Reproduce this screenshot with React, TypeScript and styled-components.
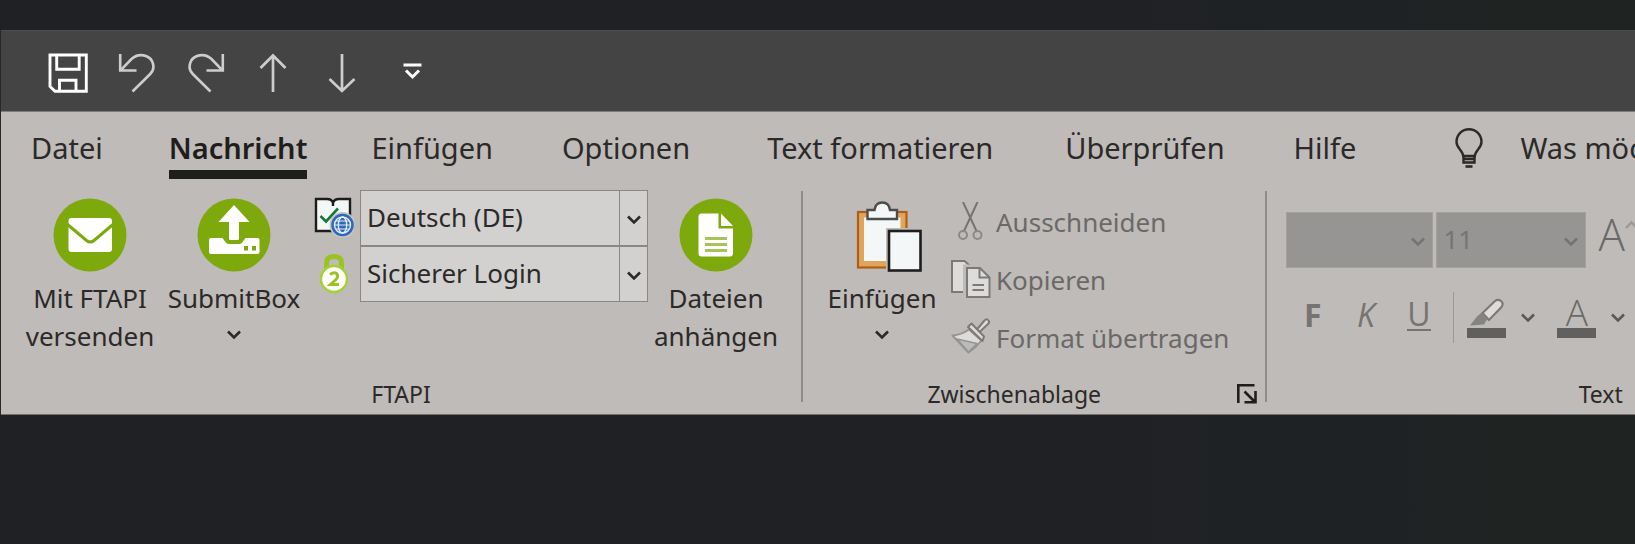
import React from 'react';
import styled, { createGlobalStyle, css } from 'styled-components';

const GlobalStyle = createGlobalStyle`
  *, *::before, *::after { box-sizing: border-box; }
  body {
    margin: 0;
    min-height: 100vh;
    overflow-x: hidden;
    font-family: "Noto Sans", "Open Sans", sans-serif;
    color: #2b2a29;
    background: linear-gradient(to right, #202125 0%, #202125 70%, #1e2224 78%, #1e2224 86%, #1f2322 92%);
  }
  button, select { font: inherit; color: inherit; }
`;

const Window = styled.div`
  margin-top: 30px;
  border-left: 1px solid #26282a;
  overflow: hidden;
`;

const QuickBar = styled.header`
  display: flex;
  align-items: center;
  gap: 29px;
  height: 81px;
  padding: 4px 47px 0;
  background: #444444;
  border-top: 1px solid #4c4c4c;
`;

const PlainButton = styled.button`
  display: flex;
  flex: none;
  align-items: center;
  margin: 0;
  padding: 0;
  border: 0;
  background: none;
  white-space: nowrap;
`;

const QuickButton = styled(PlainButton)<{ $dim?: boolean }>`
  justify-content: center;
  width: 40px;
  height: 40px;
  color: ${(p) => (p.$dim ? '#cfcdcb' : '#ffffff')};
`;

const Ribbon = styled.main`
  background: #bfbbb8;
  border-top: 1px solid #7f7d7b;
  border-bottom: 1px solid #73716f;
  padding-bottom: 4px;
`;

const TabBar = styled.nav`
  display: flex;
  align-items: flex-start;
  height: 78px;
  padding: 16px 0 0 30px;
  font-size: 29px;
  line-height: 40px;
`;

const Tab = styled(PlainButton)<{ $active?: boolean; $gap: number }>`
  margin-right: ${(p) => p.$gap}px;
  padding-bottom: 2px;
  border-bottom: 9px solid ${(p) => (p.$active ? '#1e1e1c' : 'transparent')};
  ${(p) => p.$active && css`font-weight: 600; color: #1e1e1c;`}
`;

const TellMe = styled(PlainButton)`
  align-items: flex-start;
  gap: 37px;
`;

const Groups = styled.div`
  display: flex;
`;

const Group = styled.section<{ $grow?: boolean }>`
  display: flex;
  flex-direction: column;
  flex: ${(p) => (p.$grow ? '1 0 auto' : 'none')};
`;

const GroupBody = styled.div<{ $left: number; $right: number; $gap?: number }>`
  display: flex;
  align-items: flex-start;
  gap: ${(p) => p.$gap ?? 0}px;
  height: 188px;
  padding: 0 ${(p) => p.$right}px 0 ${(p) => p.$left}px;
`;

const Caption = styled.footer<{ $end?: boolean }>`
  display: flex;
  align-items: center;
  gap: 12px;
  height: 32px;
  padding-right: ${(p) => (p.$end ? 16 : 0)}px;
  font-size: 23px;
  line-height: 32px;
  text-align: ${(p) => (p.$end ? 'right' : 'center')};
`;

const CaptionText = styled.span`
  flex: 1;
`;

const Launcher = styled(PlainButton)`
  margin-right: 8px;
`;

const Separator = styled.div`
  flex: none;
  width: 2px;
  margin: 1px 0 8px;
  background: #8e8b89;
`;

const ShortSeparator = styled.div`
  flex: none;
  width: 1px;
  height: 51px;
  margin: 0 13px 0 8px;
  background: #9b9996;
`;

const LargeButton = styled(PlainButton)<{ $width: number }>`
  flex-direction: column;
  width: ${(p) => p.$width}px;
  padding-top: 8px;
  font-size: 26px;
  line-height: 38px;
  text-align: center;

  svg:first-child { margin-bottom: 7px; }
  svg + span + svg { margin-top: 13px; }
`;

const Fields = styled.div`
  margin: 0 5px 0 2px;
`;

const FieldRow = styled.label`
  display: flex;
  align-items: center;
  gap: 6px;
  font-size: 26px;

  > svg { flex: none; }
`;

const SelectFrame = styled.span<{ $width: number; $disabled?: boolean }>`
  position: relative;
  display: block;
  width: ${(p) => p.$width}px;
  height: 56px;
  border: 1px solid ${(p) => (p.$disabled ? '#a3a19e' : '#8a8885')};
  background: ${(p) => (p.$disabled ? '#969593' : '#d2d1cf')};
  color: ${(p) => (p.$disabled ? '#757471' : '#2b2a29')};
  font-size: 26px;
`;

const Select = styled.select`
  display: block;
  width: 100%;
  height: 100%;
  padding: 0 32px 3px 6px;
  border: 0;
  border-radius: 0;
  appearance: none;
  background: none;
  opacity: 1;
`;

const SelectArrow = styled.span<{ $disabled?: boolean }>`
  position: absolute;
  top: 0;
  right: 0;
  display: flex;
  align-items: center;
  justify-content: center;
  width: 28px;
  height: 100%;
  padding-top: 4px;
  border-left: ${(p) => (p.$disabled ? 0 : 1)}px solid #8a8885;
  pointer-events: none;
`;

const Commands = styled.div`
  padding-top: 3px;
`;

const SmallButton = styled(PlainButton)`
  gap: 5px;
  height: 58px;
  font-size: 26px;
  color: #6b6967;
`;

const FontPanel = styled.div`
  padding-top: 22px;
  color: #6a6967;
`;

const FontRow = styled.div<{ $top?: number }>`
  display: flex;
  align-items: center;
  margin-top: ${(p) => p.$top ?? 0}px;

  > ${SelectFrame} { margin-right: 3px; }
`;

const GrowButton = styled(PlainButton)`
  align-self: flex-start;
  align-items: flex-start;
  margin-left: 9px;
  font-size: 44px;
  line-height: 44px;
  font-family: "Open Sans", "Noto Sans", sans-serif;
  font-weight: 300;

  svg { margin-top: 8px; }
`;

const LetterButton = styled(PlainButton)<{ $look: 'bold' | 'italic' | 'underline' }>`
  justify-content: center;
  width: 53px;
  height: 51px;
  padding-bottom: 6px;
  font-size: 32px;
  font-weight: ${(p) => (p.$look === 'bold' ? 700 : 400)};
  font-style: ${(p) => (p.$look === 'italic' ? 'italic' : 'normal')};
  font-family: "Open Sans", "Noto Sans", sans-serif;
  color: #757472;

  span {
    line-height: 30px;
    border-bottom: ${(p) => (p.$look === 'underline' ? 2 : 0)}px solid;
  }
`;

const ColorButton = styled(PlainButton)`
  gap: 15px;

  & + & { margin-left: 22px; }
`;

const ColorSwatch = styled.span`
  display: flex;
  justify-content: center;
  width: 39px;
  height: 40px;
  border-bottom: 10px solid #61605e;
  font-size: 37px;
  line-height: 28px;
  font-family: "Open Sans", "Noto Sans", sans-serif;
  font-weight: 300;
`;

const Chevron = ({ color = '#2b2a29' }: { color?: string }) => (
  <svg width="14" height="10" viewBox="0 0 14 10" fill="none" stroke={color} strokeWidth="2.6" aria-hidden>
    <path d="M1 1.5 7 7.5 13 1.5" />
  </svg>
);

const SaveIcon = () => (
  <svg width="40" height="40" viewBox="0 0 40 40" fill="none" stroke="currentColor" strokeWidth="2.9">
    <path d="M2 2H38.300V38.300H7L2 33.500zM8.700 2v14.300h22.500V2M11.500 38V27.200h16.500V38" />
  </svg>
);

const UndoIcon = ({ flip }: { flip?: boolean }) => (
  <svg width="40" height="40" viewBox="0 0 40 40" fill="none" stroke="currentColor" strokeWidth="2.6">
    <g transform={flip ? 'translate(40 0) scale(-1 1)' : undefined}>
      <path d="M3.200 1V17.500H19.500M3.600 17.300 14.500 6C22-1 32.500 2.500 35.200 8.500c2.500 5.500 1 9.500-2 12.500L15.500 38.500" />
    </g>
  </svg>
);

const ArrowIcon = ({ down }: { down?: boolean }) => (
  <svg width="40" height="40" viewBox="0 0 40 40" fill="none" stroke="currentColor" strokeWidth="2.7">
    <path d={down ? 'M18 1V38M5.500 26 18 38 30.500 26' : 'M18 39V2M5.500 15 18 2.500 30.500 15'} />
  </svg>
);

const CustomizeIcon = () => (
  <svg width="40" height="40" viewBox="0 0 40 40" fill="none" stroke="currentColor" strokeWidth="3">
    <path d="M10.500 12H28.500M13 17.500 19.500 24 26 17.500" />
  </svg>
);

const BulbIcon = () => (
  <svg width="28" height="46" viewBox="0 0 28 46" fill="none" stroke="#2b2a29" strokeWidth="2.4" aria-hidden>
    <path d="M8.500 29.500C8.500 22 1.500 21 1.500 13.700A12.500 12.500 0 0 1 26.500 13.700C26.500 21 19.500 22 19.500 29.500" />
    <path d="M8.500 28V34.500H19.500V28zM8.500 31H19.500" />
    <path d="M10.500 38.500H17.500" strokeWidth="2.600" />
  </svg>
);

const MailIcon = () => (
  <svg width="74" height="74" viewBox="0 0 74 74" aria-hidden>
    <circle cx="37" cy="37" r="36.500" fill="#7da90d" />
    <rect x="15.500" y="20" width="43.500" height="34" rx="3" fill="#fff" />
    <path d="M14 26 33.500 42.500Q37.300 45.500 41 42.500L60.500 26" fill="none" stroke="#7da90d" strokeWidth="3" />
  </svg>
);

const UploadIcon = () => (
  <svg width="74" height="74" viewBox="0 0 74 74" aria-hidden>
    <circle cx="37" cy="37" r="36.500" fill="#7da90d" />
    <path fill="#fff" d="M37 7 52.500 24H42V40.500Q42 42 40.500 42H33.500Q32 42 32 40.500V24H21.500z" />
    <path fill="#fff" d="M14 40Q12 40 12 42V54Q12 56 14 56H60.500Q62.500 56 62.500 54V42Q62.500 40 60.500 40H48.500L46 43.500Q44.500 46 42 46H32Q29.500 46 28 43.500L25.500 40z" />
    <path fill="#7da90d" d="M47 48h4v4.500h-4zM55 48h4v4.500h-4z" />
  </svg>
);

const DocIcon = () => (
  <svg width="74" height="74" viewBox="0 0 74 74" aria-hidden>
    <circle cx="37" cy="37" r="36.500" fill="#7da90d" />
    <path fill="#fff" d="M23 15.500H39.500V30.500H54V55.500Q54 58.500 51 58.500H22.500Q19.500 58.500 19.500 55.500V18.500Q19.500 15.500 23 15.500z" />
    <path fill="#fff" d="M42 15.500 54 28H42z" />
    <path stroke="#a6c556" strokeWidth="2.800" d="M26 40.500H48M26 46.500H48M26 52.500H48" />
  </svg>
);

const LanguageIcon = () => (
  <svg width="40" height="42" viewBox="0 0 40 42" fill="none" aria-hidden>
    <path d="M2 2H13Q17.500 2 19 5.500Q20.500 2 25 2H36V34H2z" fill="#f3f7f6" stroke="#1c1c1c" strokeWidth="2.400" />
    <path d="M19 3V9" stroke="#1c1c1c" strokeWidth="2.400" />
    <path d="M6.500 19 12 24.500 24 11.500" stroke="#187a3a" strokeWidth="2.600" />
    <circle cx="28.500" cy="28" r="13" fill="#c6c4c2" />
    <circle cx="28.500" cy="28" r="11.200" fill="#2c68bd" />
    <g stroke="#e6eefa" strokeWidth="1.400">
      <ellipse cx="28.500" cy="28" rx="4.200" ry="8" />
      <circle cx="28.500" cy="28" r="8" />
      <path d="M20.500 28H36.500M22 24H35M22 32H35" strokeWidth="1.200" />
    </g>
  </svg>
);

const LockIcon = () => (
  <svg width="40" height="40" viewBox="0 0 40 40" fill="none" aria-hidden>
    <path d="M12.500 15V9Q12.500 2.500 20 2.500T27.500 9V15" stroke="#98c322" strokeWidth="5" />
    <circle cx="20" cy="25" r="13" fill="#fff" stroke="#a5d02f" strokeWidth="2.400" />
    <path d="M16 20.500Q20 17.500 22.600 19.500Q25 22.500 21.500 26L16.500 30.500H25" stroke="#98c322" strokeWidth="3" />
  </svg>
);

const PasteIcon = () => (
  <svg width="84" height="74" viewBox="-16 0 84 74" fill="none" aria-hidden>
    <rect x="2" y="14" width="48.500" height="55.500" fill="#e0a55c" stroke="#b35c14" strokeWidth="2.200" />
    <rect x="8" y="19.500" width="36.500" height="43.500" fill="#f3f7f7" />
    <path d="M11.500 21V12H18.500Q19.500 4.500 26.300 4.500T34 12H41V21z" fill="#f3f7f7" stroke="#4d4d4d" strokeWidth="2.400" />
    <rect x="30" y="30" width="37" height="44" fill="#bfbbb8" />
    <rect x="33" y="33" width="31.500" height="39.500" fill="#f3f7f7" stroke="#1e1e1e" strokeWidth="2.600" />
  </svg>
);

const CutIcon = () => (
  <svg width="42" height="40" viewBox="0 0 42 40" fill="none" stroke="#8b8987" strokeWidth="2" aria-hidden>
    <path d="M14 0 27.500 29M28.500 0 15 29" stroke="#767472" />
    <circle cx="14" cy="33" r="4" />
    <circle cx="28.500" cy="33" r="4" />
  </svg>
);

const CopyIcon = () => (
  <svg width="42" height="40" viewBox="0 0 42 40" stroke="#7c7a78" strokeWidth="2" fill="#dddcda" aria-hidden>
    <path d="M15.500 32H3V1H15.500L20.500 5.500" />
    <path d="M14 4.500H22V37H14z" stroke="none" fill="#bfbbb8" />
    <path d="M18 8H31L40.500 17.500V37H18z" />
    <path d="M30.500 8V17.500H40.500M23.500 25H35M23.500 30H35" fill="none" />
  </svg>
);

const BrushIcon = () => (
  <svg width="42" height="40" viewBox="0 0 42 40" stroke="#7c7a78" strokeWidth="2" strokeLinejoin="round" aria-hidden>
    <path d="M20 11.500Q12 17 3.500 17.500L19.500 34.500Q27 29.500 32.500 22.500z" fill="#dddcda" stroke="#969492" />
    <path d="M8 21 28 25.500 19.500 34z" fill="#bdbbb9" stroke="#969492" strokeWidth="1.500" />
    <path d="M27 12.500 35.500 2.500Q37.500 0 39.500 2.500Q41 4.500 38.500 6.500L29.500 15z" fill="#dddcda" />
    <path d="M19 9 22.500 5.500 35 18.500 33.500 23z" fill="#dddcda" />
  </svg>
);

const LauncherIcon = () => (
  <svg width="20" height="20" viewBox="0 0 20 20" fill="none" stroke="#1e1e1e" strokeWidth="2.600" aria-hidden>
    <path d="M1.300 19V1.300H17.500M7.500 7.500 17.500 17.500M7.500 18.200H18.500V7" />
  </svg>
);

const HighlighterIcon = () => (
  <svg width="39" height="30" viewBox="0 0 39 30" aria-hidden>
    <path d="M3 27.500 10 18.500 14 15 20 21.500 17 26.500z" fill="#868482" />
    <path d="M15.500 15 28 3Q31 .700 34 3T34.500 9L22 22z" fill="#dddcda" stroke="#7c7a78" strokeWidth="2.200" />
  </svg>
);

const CaretUp = () => (
  <svg width="14" height="10" viewBox="0 0 14 10" fill="none" stroke="#9b9997" strokeWidth="2.400" aria-hidden>
    <path d="M1 8 6.500 2.500 12 8" />
  </svg>
);

const TABS = [
  { label: 'Datei', gap: 66 },
  { label: 'Nachricht', gap: 64, active: true },
  { label: 'Einfügen', gap: 69 },
  { label: 'Optionen', gap: 77 },
  { label: 'Text formatieren', gap: 72 },
  { label: 'Überprüfen', gap: 69 },
  { label: 'Hilfe', gap: 99 },
];

const FIELDS = [
  { name: 'Sprache', value: 'Deutsch (DE)', icon: <LanguageIcon /> },
  { name: 'Sicherheit', value: 'Sicherer Login', icon: <LockIcon /> },
];

const COMMANDS = [
  { label: 'Ausschneiden', icon: <CutIcon /> },
  { label: 'Kopieren', icon: <CopyIcon /> },
  { label: 'Format übertragen', icon: <BrushIcon /> },
];

export default function App() {
  return (
    <>
      <GlobalStyle />
      <Window>
        <QuickBar>
          <QuickButton aria-label="Speichern"><SaveIcon /></QuickButton>
          <QuickButton $dim aria-label="Rückgängig"><UndoIcon /></QuickButton>
          <QuickButton $dim aria-label="Wiederholen"><UndoIcon flip /></QuickButton>
          <QuickButton $dim aria-label="Vorheriges Element"><ArrowIcon /></QuickButton>
          <QuickButton $dim aria-label="Nächstes Element"><ArrowIcon down /></QuickButton>
          <QuickButton aria-label="Symbolleiste anpassen"><CustomizeIcon /></QuickButton>
        </QuickBar>

        <Ribbon>
          <TabBar>
            {TABS.map((t) => (
              <Tab key={t.label} $gap={t.gap} $active={t.active}>{t.label}</Tab>
            ))}
            <TellMe><BulbIcon />Was möchten</TellMe>
          </TabBar>

          <Groups>
            <Group>
              <GroupBody $left={23} $right={22}>
                <LargeButton $width={132}>
                  <MailIcon />
                  <span>Mit FTAPI<br />versenden</span>
                </LargeButton>
                <LargeButton $width={156}>
                  <UploadIcon />
                  <span>SubmitBox</span>
                  <Chevron />
                </LargeButton>
                <Fields>
                  {FIELDS.map((f) => (
                    <FieldRow key={f.name}>
                      {f.icon}
                      <SelectFrame $width={288}>
                        <Select aria-label={f.name}><option>{f.value}</option></Select>
                        <SelectArrow><Chevron /></SelectArrow>
                      </SelectFrame>
                    </FieldRow>
                  ))}
                </Fields>
                <LargeButton $width={126}>
                  <DocIcon />
                  <span>Dateien<br />anhängen</span>
                </LargeButton>
              </GroupBody>
              <Caption><CaptionText>FTAPI</CaptionText></Caption>
            </Group>
            <Separator />

            <Group>
              <GroupBody $left={21} $right={36} $gap={9}>
                <LargeButton $width={116}>
                  <PasteIcon />
                  <span>Einfügen</span>
                  <Chevron />
                </LargeButton>
                <Commands>
                  {COMMANDS.map((c) => (
                    <SmallButton key={c.label}>{c.icon}{c.label}</SmallButton>
                  ))}
                </Commands>
              </GroupBody>
              <Caption>
                <CaptionText>Zwischenablage</CaptionText>
                <Launcher aria-label="Zwischenablage öffnen"><LauncherIcon /></Launcher>
              </Caption>
            </Group>
            <Separator />

            <Group $grow>
              <GroupBody $left={19} $right={0}>
                <FontPanel>
                  <FontRow>
                    <SelectFrame $width={147} $disabled>
                      <Select disabled aria-label="Schriftart"><option></option></Select>
                      <SelectArrow $disabled><Chevron color="#757471" /></SelectArrow>
                    </SelectFrame>
                    <SelectFrame $width={150} $disabled>
                      <Select disabled aria-label="Schriftgrad"><option>11</option></Select>
                      <SelectArrow $disabled><Chevron color="#757471" /></SelectArrow>
                    </SelectFrame>
                    <GrowButton aria-label="Schrift vergrößern">A<CaretUp /></GrowButton>
                  </FontRow>
                  <FontRow $top={24}>
                    <LetterButton $look="bold"><span>F</span></LetterButton>
                    <LetterButton $look="italic"><span>K</span></LetterButton>
                    <LetterButton $look="underline"><span>U</span></LetterButton>
                    <ShortSeparator />
                    <ColorButton aria-label="Texthervorhebungsfarbe">
                      <ColorSwatch><HighlighterIcon /></ColorSwatch>
                      <Chevron color="#5a5957" />
                    </ColorButton>
                    <ColorButton aria-label="Schriftfarbe">
                      <ColorSwatch>A</ColorSwatch>
                      <Chevron color="#5a5957" />
                    </ColorButton>
                  </FontRow>
                </FontPanel>
              </GroupBody>
              <Caption $end><CaptionText>Text</CaptionText></Caption>
            </Group>
          </Groups>
        </Ribbon>
      </Window>
    </>
  );
}
